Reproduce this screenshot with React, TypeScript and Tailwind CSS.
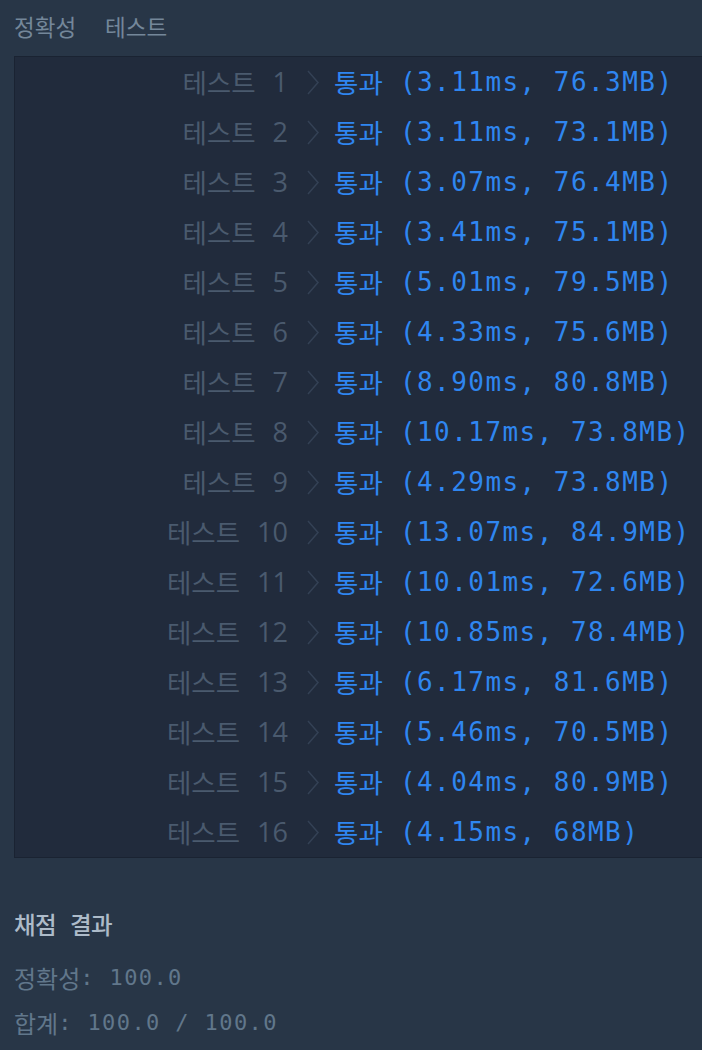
const rows = [
  { n: 1, r: "(3.11ms, 76.3MB)" },
  { n: 2, r: "(3.11ms, 73.1MB)" },
  { n: 3, r: "(3.07ms, 76.4MB)" },
  { n: 4, r: "(3.41ms, 75.1MB)" },
  { n: 5, r: "(5.01ms, 79.5MB)" },
  { n: 6, r: "(4.33ms, 75.6MB)" },
  { n: 7, r: "(8.90ms, 80.8MB)" },
  { n: 8, r: "(10.17ms, 73.8MB)" },
  { n: 9, r: "(4.29ms, 73.8MB)" },
  { n: 10, r: "(13.07ms, 84.9MB)" },
  { n: 11, r: "(10.01ms, 72.6MB)" },
  { n: 12, r: "(10.85ms, 78.4MB)" },
  { n: 13, r: "(6.17ms, 81.6MB)" },
  { n: 14, r: "(5.46ms, 70.5MB)" },
  { n: 15, r: "(4.04ms, 80.9MB)" },
  { n: 16, r: "(4.15ms, 68MB)" },
];

const sans = "font-['Noto_Sans_CJK_KR',sans-serif]";
const num = "font-['Open_Sans','Noto_Sans_CJK_KR',sans-serif]";
const mono = "font-['DejaVu_Sans_Mono','Noto_Sans_CJK_KR',monospace]";

function Chevron() {
  return (
    <svg width="12" height="25" viewBox="0 0 12 25" className="block">
      <polyline points="1,1 11,12.5 1,24" fill="none" stroke="#344155" strokeWidth="1.5" />
    </svg>
  );
}

export default function App() {
  return (
    <div className="w-[702px] h-[1050px] bg-[#283647] overflow-hidden">
      {/* tabs */}
      <div className={`flex items-center gap-[29px] h-[56px] pl-[14px] pb-[3px] text-[22.5px] text-[#74879a] ${sans}`}>
        <span>정확성</span>
        <span>테스트</span>
      </div>

      {/* result list */}
      <div className="ml-[14px] w-[720px] bg-[#212b3c] border border-[#1a2332]">
        {rows.map((row) => (
          <div key={row.n} className="flex items-center h-[50px]">
            <div className="w-[273px] flex justify-end items-center text-[#4a5a6e]">
              <span className={`text-[26.5px] ${sans}`}>테스트</span>
              <span className={`ml-[17px] text-[27px] font-medium ${num}`}>{row.n}</span>
            </div>
            <div className="w-[46px] flex justify-center pl-[4px]">
              <Chevron />
            </div>
            <div className="flex items-center text-[#2f86f0] whitespace-pre">
              <span className={`text-[26.5px] ${sans}`}>통과</span>
              <span className={`text-[26px] tracking-[1.45px] ${mono}`}> {row.r}</span>
            </div>
          </div>
        ))}
      </div>

      {/* summary */}
      <div className="pl-[14px] pt-[52px]">
        <div className={`text-[23.5px] font-medium text-[#adbbc9] ${mono} leading-[32px] tracking-[-0.5px]`}>
          채점 결과
        </div>
        <div className="mt-[20px] flex items-center whitespace-pre text-[#61778b] leading-[32px]">
          <span className={`text-[24px] ${sans}`}>정확성</span>
          <span className={`text-[22px] tracking-[1.4px] ${mono}`}>: 100.0</span>
        </div>
        <div className="mt-[13px] flex items-center whitespace-pre text-[#61778b] leading-[32px]">
          <span className={`text-[24px] ${sans}`}>합계</span>
          <span className={`text-[22px] tracking-[1.4px] ${mono}`}>: 100.0 / 100.0</span>
        </div>
      </div>
    </div>
  );
}
